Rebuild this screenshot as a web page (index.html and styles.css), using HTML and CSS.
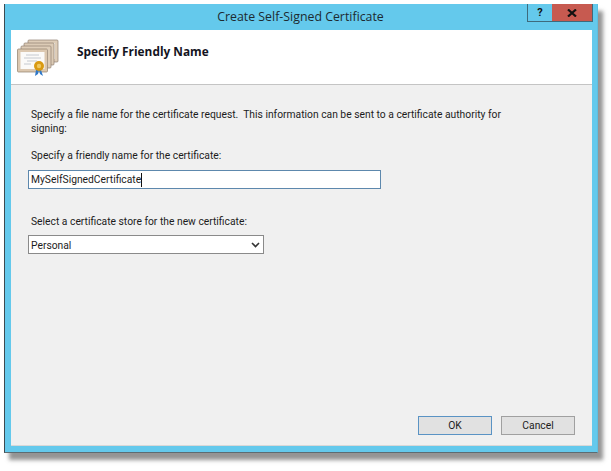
FILE: index.html
```html
<!DOCTYPE html>
<html lang="en">
<head>
<meta charset="utf-8">
<title>Create Self-Signed Certificate</title>
<link rel="stylesheet" href="styles.css">
</head>
<body>
<div class="window">
  <div class="titlebar">
    <div class="title">Create Self-Signed Certificate</div>
    <div class="controls">
      <div class="ctl help">?</div>
      <div class="ctl close">
        <svg width="10" height="8" viewBox="0 0 10 8"><path d="M1 0.5 L9 7.5 M9 0.5 L1 7.5" stroke="#111" stroke-width="2.2" fill="none"/></svg>
      </div>
    </div>
  </div>
  <div class="client">
    <div class="banner">
      <svg class="certs" width="44" height="38" viewBox="0 0 44 38">
        <rect x="11" y="1" width="30" height="22" rx="1" fill="#decdb8" stroke="#8f8070" stroke-width=".7"/>
        <rect x="14" y="4" width="24" height="16" fill="#f6f2ec"/>
        <rect x="7" y="4" width="30" height="22" rx="1" fill="#dccbb6" stroke="#8f8070" stroke-width=".7"/>
        <rect x="10" y="7" width="24" height="16" fill="#f6f2ec"/>
        <rect x="4" y="7" width="30" height="22" rx="1" fill="#decdb8" stroke="#8f8070" stroke-width=".7"/>
        <rect x="7" y="10" width="24" height="16" fill="#f8f6f2"/>
        <rect x="0.5" y="10" width="30" height="23" rx="1" fill="#dcc8b0" stroke="#8f7e6a" stroke-width=".7"/>
        <rect x="3.5" y="13" width="24" height="17" fill="#fbfaf8"/>
        <path d="M9 16 H22 M7 19 H24 M10 22 H20 M7 25 H14" stroke="#b9bcc4" stroke-width=".8"/>
        <path d="M19 31 L18 37 L21 35 L22 31 Z M24 31 L26 37 L23 35 L22 31 Z" fill="#2f78c8"/>
        <circle cx="22" cy="27" r="5" fill="#d99a12"/>
        <circle cx="22" cy="27" r="2.2" fill="#f0c860"/>
      </svg>
      <div class="heading">Specify Friendly Name</div>
    </div>
    <div class="content">
      <p class="intro">Specify a file name for the certificate request.&nbsp; This information can be sent to a certificate authority for signing:</p>
      <div class="label name-label">Specify a friendly name for the certificate:</div>
      <div class="textbox"><span>MySelfSignedCertificate</span><span class="caret"></span></div>
      <div class="label store-label">Select a certificate store for the new certificate:</div>
      <div class="select">
        <span>Personal</span>
        <svg width="9" height="6" viewBox="0 0 9 6"><path d="M1 1 L4.5 4.5 L8 1" stroke="#333" stroke-width="1.6" fill="none"/></svg>
      </div>
      <div class="actions">
        <div class="btn default">OK</div>
        <div class="btn">Cancel</div>
      </div>
    </div>
  </div>
</div>
</body>
</html>
```

FILE: styles.css
```css
html, body {
  margin: 0;
  padding: 0;
  background: #fff;
}
body {
  width: 611px;
  height: 471px;
  overflow: hidden;
  padding: 4px 0 0 4px;
  box-sizing: border-box;
  font-family: "Roboto", "Lato", sans-serif;
  font-size: 10.3px;
  color: #1c1c1c;
}
.window {
  width: 594px;
  height: 449px;
  box-sizing: border-box;
  background: #64c9ec;
  border-left: 1px solid #3d4a50;
  border-bottom: 1px solid #5d6c72;
  border-right: 1px solid #5ebfe0;
  padding: 0 5px 6px 6px;
  display: flex;
  flex-direction: column;
  box-shadow: 5px 7px 4px rgba(60, 60, 60, .55);
}
.titlebar {
  height: 26px;
  flex: none;
  display: flex;
  position: relative;
  justify-content: center;
}
.title {
  font-family: "Open Sans", sans-serif;
  font-size: 12.35px;
  line-height: 25px;
  color: #1d2a30;
  margin-left: -2px;
}
.controls {
  position: absolute;
  right: -1px;
  top: 0;
  display: flex;
  height: 18px;
}
.ctl {
  height: 17px;
  display: flex;
  align-items: center;
  justify-content: center;
  border-bottom: 1px solid #3e6a7c;
}
.help {
  width: 24px;
  border-left: 1px solid #3e6a7c;
  font-weight: 700;
  font-size: 11px;
  color: #111;
}
.close {
  width: 40px;
  background: #c75a50;
  border-right: 1px solid #3e6a7c;
}
.client {
  flex: 1;
  display: flex;
  flex-direction: column;
  background: #f0f0f0;
  border-bottom: 1px solid #d8d8d8;
}
.banner {
  height: 54px;
  flex: none;
  background: #fff;
  border-bottom: 1px solid #c4c4c4;
  display: flex;
  align-items: flex-start;
}
.certs {
  margin: 9px 0 0 6px;
}
.heading {
  font-family: "Open Sans", sans-serif;
  font-weight: 700;
  font-size: 11.85px;
  margin: 13px 0 0 16px;
  color: #14141e;
}
.content {
  flex: 1;
  display: flex;
  flex-direction: column;
  padding: 23px 17px 10px 17px;
}
.intro {
  margin: 0 0 0 3px;
  width: 480px;
  line-height: 13.5px;
}
.label {
  margin-left: 3px;
  line-height: 14px;
}
.name-label {
  margin-top: 14px;
}
.textbox {
  width: 353px;
  height: 19px;
  margin-top: 7px;
  box-sizing: border-box;
  border: 1px solid #5d88ad;
  background: #fff;
  display: flex;
  align-items: center;
  padding-left: 2px;
  line-height: 17px;
}
.caret {
  width: 1px;
  height: 14px;
  background: #111;
}
.store-label {
  margin-top: 26px;
}
.select {
  width: 236px;
  height: 19px;
  margin-top: 6px;
  box-sizing: border-box;
  border: 1px solid #8a8a8a;
  background: #fff;
  display: flex;
  align-items: center;
  justify-content: space-between;
  padding: 1px 3px 0 2px;
}
.actions {
  margin-top: auto;
  display: flex;
  justify-content: flex-end;
  gap: 9px;
}
.btn {
  width: 74px;
  height: 19px;
  box-sizing: border-box;
  border: 1px solid #a0a0a0;
  background: #e1e1e1;
  display: flex;
  align-items: center;
  justify-content: center;
}
.default {
  border-color: #5a93c4;
}
```
